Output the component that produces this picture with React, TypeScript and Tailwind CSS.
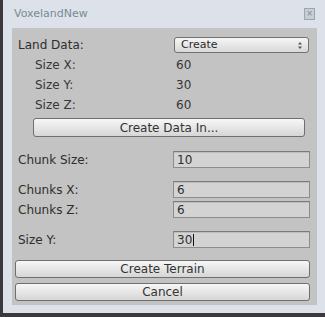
const font = { fontFamily: '"DejaVu Sans", Verdana, sans-serif' };

function Field({ label, value, caret }: { label: string; value: string; caret?: boolean }) {
  return (
    <div className="flex h-[17px] items-center">
      <span className="w-[161px] pl-[6px]">{label}</span>
      <div className="flex h-full w-[137px] items-center border border-[#8c8c8c] border-t-[#7a7a7a] bg-[#d3d3d3] pl-[3px] shadow-[inset_0_1px_0_#bdbdbd]">
        <span>{value}</span>
        {caret && <span className="ml-[1px] h-[12px] w-px bg-[#111]" />}
      </div>
    </div>
  );
}

function Btn({ label, className }: { label: string; className: string }) {
  return (
    <div
      className={`flex items-center justify-center rounded-[3px] border border-[#6f6f6f] bg-gradient-to-b from-[#f7f7f7] to-[#d6d6d6] text-[#333] ${className}`}
    >
      {label}
    </div>
  );
}

export default function App() {
  return (
    <div className="flex h-[317px] w-[325px] bg-[#3b393d]" style={font}>
      <div className="ml-[3px] flex h-[313px] flex-1 flex-col bg-[#dde2ea]">
        <div className="flex h-[28px] items-center justify-between pl-[11px] pr-[10px]">
          <span className="text-[11px] text-[#778a93]">VoxelandNew</span>
          <div className="flex h-[12px] w-[11px] items-center justify-center border border-[#9aa5b1] bg-[#c8ced6] text-[8px] leading-none text-[#7d8792]">
            ×
          </div>
        </div>
        <div className="ml-[9px] mr-[8px] flex flex-col bg-[#c3c3c3] pb-[4px] pt-[9px] text-[12px] text-[#2e2e2e]">
          <div className="flex h-[16px] items-center">
            <span className="w-[162px] pl-[6px]">Land Data:</span>
            <div className="flex h-full w-[135px] items-center justify-between rounded-[3px] border border-[#727272] bg-gradient-to-b from-[#f6f6f6] to-[#d8d8d8] pl-[6px] pr-[6px] text-[11px] text-[#2a2a2a]">
              <span>Create</span>
              <svg width="4" height="7" viewBox="0 0 4 7" fill="#555">
                <path d="M2 0 L4 2.5 L0 2.5 Z" />
                <path d="M0 4.5 L4 4.5 L2 7 Z" />
              </svg>
            </div>
          </div>
          <div className="mt-[2px] flex flex-col text-[#363636]">
            {[
              ["Size X:", "60"],
              ["Size Y:", "30"],
              ["Size Z:", "60"],
            ].map(([l, v]) => (
              <div key={l} className="flex h-[20px] items-center">
                <span className="w-[164px] pl-[23px]">{l}</span>
                <span>{v}</span>
              </div>
            ))}
          </div>
          <Btn label="Create Data In..." className="ml-[21px] mt-[3px] h-[19px] w-[272px]" />
          <div className="mt-[14px]">
            <Field label="Chunk Size:" value="10" />
          </div>
          <div className="mt-[13px]">
            <Field label="Chunks X:" value="6" />
          </div>
          <div className="mt-[3px]">
            <Field label="Chunks Z:" value="6" />
          </div>
          <div className="mt-[13px]">
            <Field label="Size Y:" value="30" caret />
          </div>
          <Btn label="Create Terrain" className="ml-[3px] mt-[12px] h-[18px] w-[295px]" />
          <Btn label="Cancel" className="ml-[3px] mt-[5px] h-[18px] w-[295px]" />
        </div>
      </div>
    </div>
  );
}
